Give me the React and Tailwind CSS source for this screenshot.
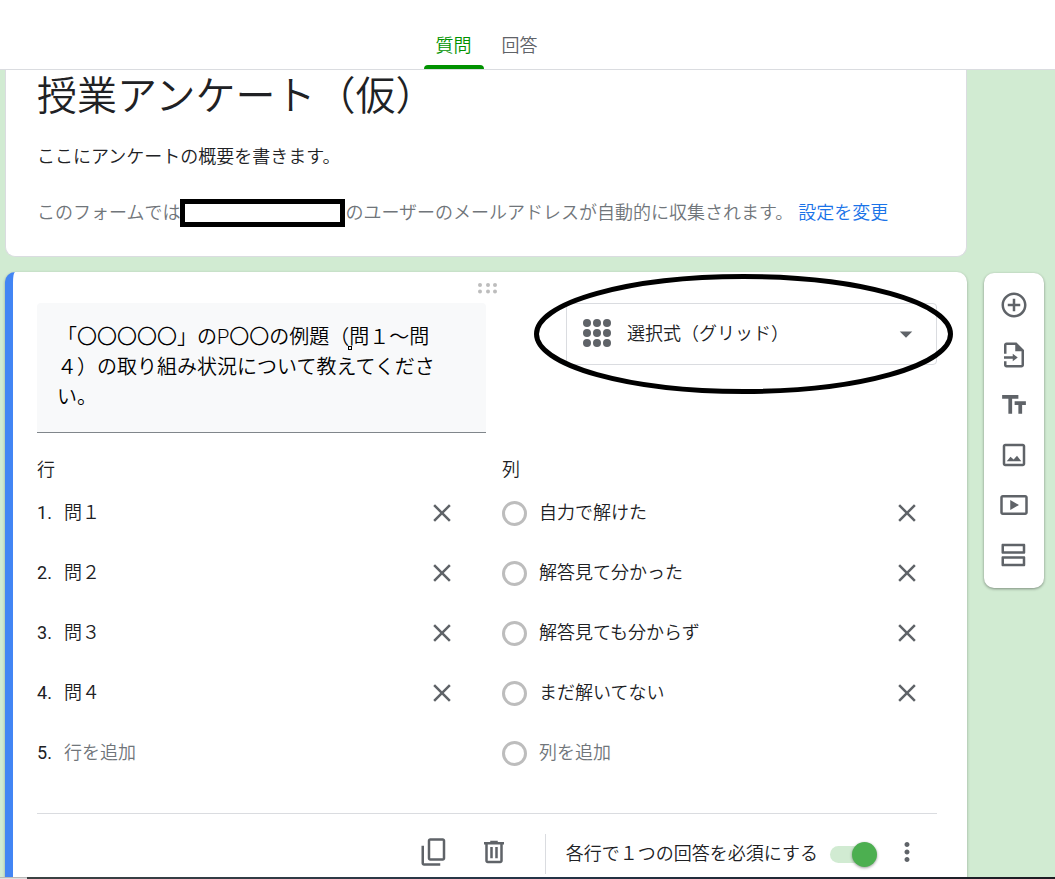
import { useState } from 'react'

const toolbarItems = [
  {
    label: '質問を追加',
    path: 'M13 7h-2v4H7v2h4v4h2v-4h4v-2h-4V7zm-1-5C6.48 2 2 6.48 2 12s4.48 10 10 10 10-4.48 10-10S17.52 2 12 2zm0 18c-4.41 0-8-3.59-8-8s3.59-8 8-8 8 3.59 8 8-3.59 8-8 8z',
  },
  {
    label: '質問をインポート',
    path: 'M14 2H6c-1.1 0-2 .9-2 2v7h2V4h7v5h5v11H6v-3H4v3c0 1.1.9 2 2 2h12c1.1 0 2-.9 2-2V8l-6-6zM11 11v2H4v2h7v2l4-3z',
  },
  {
    label: 'タイトルと説明を追加',
    path: 'M2.5 4v3h5v12h3V7h5V4h-13zm19 5h-9v3h3v7h3v-7h3V9z',
  },
  {
    label: '画像を追加',
    path: 'M19 5v14H5V5h14m0-2H5c-1.1 0-2 .9-2 2v14c0 1.1.9 2 2 2h14c1.1 0 2-.9 2-2V5c0-1.1-.9-2-2-2zm-4.6 9.6l-2.7 3-2.5-2.2L6.2 17h11.6l-3.4-4.4z',
  },
  {
    label: '動画を追加',
    path: 'M21 4H3c-1.1 0-2 .9-2 2v12c0 1.1.9 2 2 2h18c1.1 0 2-.9 2-2V6c0-1.1-.9-2-2-2zm0 14H3V6h18v12zM9 8v8l7-4z',
  },
  {
    label: 'セクションを追加',
    path: 'M20 3H3c-.6 0-1 .4-1 1v6c0 .6.4 1 1 1h17c.6 0 1-.4 1-1V4c0-.6-.4-1-1-1zm-1 6H4V5h15v4zm1 4H3c-.6 0-1 .4-1 1v6c0 .6.4 1 1 1h17c.6 0 1-.4 1-1v-6c0-.6-.4-1-1-1zm-1 6H4v-4h15v4z',
  },
]

const closePath =
  'M19 6.41L17.59 5 12 10.59 6.41 5 5 6.41 10.59 12 5 17.59 6.41 19 12 13.41 17.59 19 19 17.59 13.41 12z'
const copyPath =
  'M18 1H9c-1.1 0-2 .9-2 2v14c0 1.1.9 2 2 2h10c1.1 0 2-.9 2-2V3c0-1.1-.9-2-2-2zm1 16H9V3h10v14zM4 7H2v14c0 1.1.9 2 2 2h13v-2H4V7z'
const deletePath =
  'M15 4V3H9v1H4v2h1v13c0 1.1.9 2 2 2h10c1.1 0 2-.9 2-2V6h1V4h-5zm2 15H7V6h10v13zM9 8h2v9H9zm4 0h2v9h-2z'
const morePath =
  'M12 8c1.1 0 2-.9 2-2s-.9-2-2-2-2 .9-2 2 .9 2 2 2zm0 2c-1.1 0-2 .9-2 2s.9 2 2 2 2-.9 2-2-.9-2-2-2zm0 6c-1.1 0-2 .9-2 2s.9 2 2 2 2-.9 2-2-.9-2-2-2z'

function Icon({ d }) {
  return (
    <svg className="block w-[30px] h-[30px]" viewBox="0 0 24 24" fill="currentColor" aria-hidden="true">
      <path d={d} />
    </svg>
  )
}

function IconButton({ label, d }) {
  return (
    <button type="button" aria-label={label} className="shrink-0 text-[#5f6368] cursor-pointer">
      <Icon d={d} />
    </button>
  )
}

function Option({ lead, name, value, placeholder, onChange, onRemove }) {
  return (
    <li className="flex items-center h-[60px] pr-[15px]">
      {lead}
      <input
        type="text"
        aria-label={name}
        className="flex-1 min-w-0 bg-transparent outline-none placeholder:text-[#70757a]"
        value={value}
        placeholder={placeholder}
        onChange={onChange}
        readOnly={!onChange}
      />
      {onRemove && (
        <button type="button" aria-label={`${name}を削除`} onClick={onRemove} className="shrink-0 text-[#5f6368] cursor-pointer">
          <Icon d={closePath} />
        </button>
      )}
    </li>
  )
}

export default function App() {
  const [rows, setRows] = useState(['問１', '問２', '問３', '問４'])
  const [columns, setColumns] = useState(['自力で解けた', '解答見て分かった', '解答見ても分からず', 'まだ解いてない'])
  const [question, setQuestion] = useState('「〇〇〇〇〇」のP〇〇の例題（問１～問４）の取り組み状況について教えてください。')
  const [required, setRequired] = useState(true)

  const change = (list, setList, i) => (e) => setList(list.map((v, j) => (j === i ? e.target.value : v)))
  const remove = (list, setList, i) => () => setList(list.filter((_, j) => j !== i))

  const number = (n) => <span className="w-[27px] shrink-0 font-normal">{n}.</span>
  const radio = (name) => (
    <input
      type="radio"
      disabled
      aria-label={name}
      className="appearance-none shrink-0 w-[25px] h-[25px] mr-3 rounded-full border-3 border-[#bdbdbd]"
    />
  )

  return (
    <div className="h-screen flex flex-col overflow-hidden bg-[#d1ebd2] text-[18px] leading-[26px] font-[350] text-[#202124] font-[Roboto,'Noto_Sans_CJK_JP',sans-serif]">
      {/* Tabs */}
      <header className="shrink-0 h-[70px] pl-[6px] pr-[88px] flex items-end justify-center bg-white border-b border-[#dadce0]">
        <nav className="flex gap-[6px]">
          <a href="#questions" className="flex flex-col items-center w-[60px] text-[#009200]">
            質問
            <span className="mt-[6px] w-full h-1 rounded-t-[4px] bg-[#009200]" />
          </a>
          <a href="#responses" className="w-[60px] text-center text-[#5f6368]">回答</a>
        </nav>
      </header>

      <main className="flex-1 min-h-0 flex items-start overflow-hidden">
        <div className="flex-1 min-w-0 pl-[5px]">
          {/* Form header */}
          <section className="h-[187px] px-[31px] bg-white border border-t-0 border-[#dadce0] rounded-b-[10px]">
            <h1 className="text-[40px] leading-[54px]">授業アンケート（仮）</h1>
            <p className="mt-[20px]">ここにアンケートの概要を書きます。</p>
            <div className="mt-[29px] flex items-center h-7 text-[#70757a] whitespace-nowrap">
              <span>このフォームでは</span>
              <span className="w-[165px] h-7 border-5 border-black bg-white" />
              <span>のユーザーのメールアドレスが自動的に収集されます。</span>
              <a href="#settings" className="ml-[5px] text-[#1a73e8]">設定を変更</a>
            </div>
          </section>

          {/* Question card */}
          <section className="mt-[15px] pl-6 pr-[30px] pb-10 bg-white border-l-8 border-l-[#4285f4] rounded-[10px] shadow-[0_1px_3px_rgba(0,0,0,0.3)]">
            <div className="h-[31px] pt-[11px] flex justify-center">
              <svg className="w-5 h-[11px]" viewBox="0 0 20 11" fill="#bdbdbd" aria-hidden="true">
                {[3, 11, 18].map((x) => (
                  <g key={x}>
                    <circle cx={x} cy="2" r="2" />
                    <circle cx={x} cy="8.5" r="2" />
                  </g>
                ))}
              </svg>
            </div>

            <div className="flex items-start gap-20">
              <div className="relative flex-1 min-w-0">
                <textarea
                  aria-label="質問"
                  rows={3}
                  className="block w-full h-[130px] pl-5 pr-8 py-[19px] resize-none outline-none overflow-hidden text-[20px] leading-[30px] text-black bg-[#f8f9fa] border-b border-[#80868b] rounded-t-[4px]"
                  value={question}
                  onChange={(e) => setQuestion(e.target.value)}
                />
                <span className="absolute left-[311px] top-[43px] w-1 h-1 border border-black bg-white" />
              </div>

              <div className="relative w-[371px] shrink-0 text-[#5f6368]">
                <svg className="absolute left-[17px] top-4 w-7 h-7 pointer-events-none" viewBox="0 0 28 28" fill="currentColor" aria-hidden="true">
                  {[4, 14, 24].map((y) => [4, 14, 24].map((x) => <circle key={`${x}-${y}`} cx={x} cy={y} r="4" />))}
                </svg>
                <select
                  aria-label="質問の形式"
                  className="appearance-none w-full h-[62px] pl-[60px] pr-12 bg-transparent text-[#202124] border border-[#dadce0] rounded-[4px] outline-none"
                  defaultValue="grid"
                >
                  <option value="grid">選択式（グリッド）</option>
                </select>
                <div className="absolute right-4 top-4 pointer-events-none">
                  <Icon d="M7 10l5 5 5-5z" />
                </div>
                {/* Hand-drawn marker round the type selector */}
                <svg className="absolute -left-8 -top-[30px] w-[420px] h-[122px] pointer-events-none" viewBox="0 0 420 122" fill="none" aria-hidden="true">
                  <ellipse cx="209.5" cy="61" rx="207" ry="57.5" stroke="#000" strokeWidth="5" />
                </svg>
              </div>
            </div>

            <div className="flex gap-[30px] pt-6">
              <div className="flex-1 min-w-0">
                <h2>行</h2>
                <ul>
                  {rows.map((row, i) => (
                    <Option
                      key={i}
                      lead={number(i + 1)}
                      name={`行 ${i + 1}`}
                      value={row}
                      onChange={change(rows, setRows, i)}
                      onRemove={remove(rows, setRows, i)}
                    />
                  ))}
                  <Option lead={number(rows.length + 1)} name="行を追加" value="" placeholder="行を追加" />
                </ul>
              </div>
              <div className="flex-1 min-w-0">
                <h2>列</h2>
                <ul>
                  {columns.map((column, i) => (
                    <Option
                      key={i}
                      lead={radio(column)}
                      name={`列 ${i + 1}`}
                      value={column}
                      onChange={change(columns, setColumns, i)}
                      onRemove={remove(columns, setColumns, i)}
                    />
                  ))}
                  <Option lead={radio('列を追加')} name="列を追加" value="" placeholder="列を追加" />
                </ul>
              </div>
            </div>

            {/* Card actions */}
            <div className="mt-[30px] pt-5 pr-[15px] flex items-center justify-end border-t border-[#dadce0]">
              <div className="flex gap-[30px] mr-9 pb-1">
                <IconButton label="コピーを作成" d={copyPath} />
                <IconButton label="削除" d={deletePath} />
              </div>
              <div className="flex items-center h-10 pl-5 mr-[15px] border-l border-[#dadce0]">
                <label htmlFor="required">各行で１つの回答を必須にする</label>
                <input
                  id="required"
                  type="checkbox"
                  role="switch"
                  checked={required}
                  onChange={(e) => setRequired(e.target.checked)}
                  className="appearance-none relative ml-3 w-[47px] h-[25px] cursor-pointer before:absolute before:left-0 before:right-1 before:top-1 before:h-[17px] before:rounded-full before:bg-[#bdbdbd] checked:before:bg-[#d1ebd2] after:absolute after:left-0 after:top-0 after:w-[25px] after:h-[25px] after:rounded-full after:bg-white checked:after:left-[22px] checked:after:bg-[#4caf50] after:shadow-[0_1px_3px_rgba(0,0,0,0.4)]"
                />
              </div>
              <div className="flex pb-1">
                <IconButton label="その他のオプション" d={morePath} />
              </div>
            </div>
          </section>
        </div>

        {/* Side toolbar */}
        <aside className="shrink-0 w-[88px] pl-[17px] pr-[11px] pt-[203px]">
          <div className="flex flex-col items-center gap-5 pt-[17px] pb-[18px] bg-white rounded-[10px] shadow-[0_1px_3px_rgba(0,0,0,0.4)]">
            {toolbarItems.map((item) => (
              <IconButton key={item.label} label={item.label} d={item.path} />
            ))}
          </div>
        </aside>
      </main>

      {/* Bottom edge */}
      <footer className="shrink-0 flex h-[2px]">
        <div className="w-[27px] bg-[#e0e0e0] border-t border-[#b8b8b8]" />
        <div className="flex-1 bg-linear-to-r from-[#3c4243] via-[#243447] to-[#1c1c22]" />
      </footer>
    </div>
  )
}
